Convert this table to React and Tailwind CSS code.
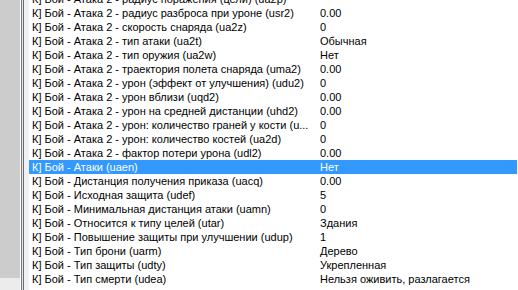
const ROWS = [
  ["К] Бой - Атака 2 - радиус поражения (цели) (ua2p)", ""],
  ["К] Бой - Атака 2 - радиус разброса при уроне (usr2)", "0.00"],
  ["К] Бой - Атака 2 - скорость снаряда (ua2z)", "0"],
  ["К] Бой - Атака 2 - тип атаки (ua2t)", "Обычная"],
  ["К] Бой - Атака 2 - тип оружия (ua2w)", "Нет"],
  ["К] Бой - Атака 2 - траектория полета снаряда (uma2)", "0.00"],
  ["К] Бой - Атака 2 - урон (эффект от улучшения) (udu2)", "0"],
  ["К] Бой - Атака 2 - урон вблизи (uqd2)", "0.00"],
  ["К] Бой - Атака 2 - урон на средней дистанции (uhd2)", "0.00"],
  ["К] Бой - Атака 2 - урон: количество граней у кости (u...", "0"],
  ["К] Бой - Атака 2 - урон: количество костей (ua2d)", "0"],
  ["К] Бой - Атака 2 - фактор потери урона (udl2)", "0.00"],
  ["К] Бой - Атаки (uaen)", "Нет", true],
  ["К] Бой - Дистанция получения приказа (uacq)", "0.00"],
  ["К] Бой - Исходная защита (udef)", "5"],
  ["К] Бой - Минимальная дистанция атаки (uamn)", "0"],
  ["К] Бой - Относится к типу целей (utar)", "Здания"],
  ["К] Бой - Повышение защиты при улучшении (udup)", "1"],
  ["К] Бой - Тип брони (uarm)", "Дерево"],
  ["К] Бой - Тип защиты (udty)", "Укрепленная"],
  ["К] Бой - Тип смерти (udea)", "Нельзя оживить, разлагается"],
];

export default function App() {
  return (
    <div
      className="flex w-[518px] h-[290px] overflow-hidden bg-white text-black text-[11px]"
      style={{ fontFamily: '"Liberation Sans", Arial, sans-serif' }}
    >
      {/* левая панель */}
      <div className="flex flex-col w-[20px] shrink-0">
        <div className="flex-1 bg-[#cccccc]" />
        <div className="h-[12px] bg-[#ececec]" />
      </div>
      <div className="w-px shrink-0 bg-white" />
      <div className="w-px shrink-0 bg-[#7a7a7a]" />
      <div className="w-px shrink-0 bg-[#e4e4e4]" />
      <div className="w-px shrink-0 bg-[#6e6e6e]" />
      <div className="w-[5px] shrink-0 bg-[#eef2f7]" />

      {/* список свойств */}
      <div className="flex-1 flex flex-col mt-[-8px] pr-px">
        {ROWS.map(([name, value, sel], i) => (
          <div
            key={i}
            className={`flex h-[14px] shrink-0 items-center leading-[14px] whitespace-nowrap ${sel ? "bg-[#3399ff] text-white" : ""}`}
          >
            <span className="w-[291px] shrink-0 pl-[3px] overflow-hidden">{name}</span>
            <span>{value}</span>
          </div>
        ))}
      </div>
    </div>
  );
}
